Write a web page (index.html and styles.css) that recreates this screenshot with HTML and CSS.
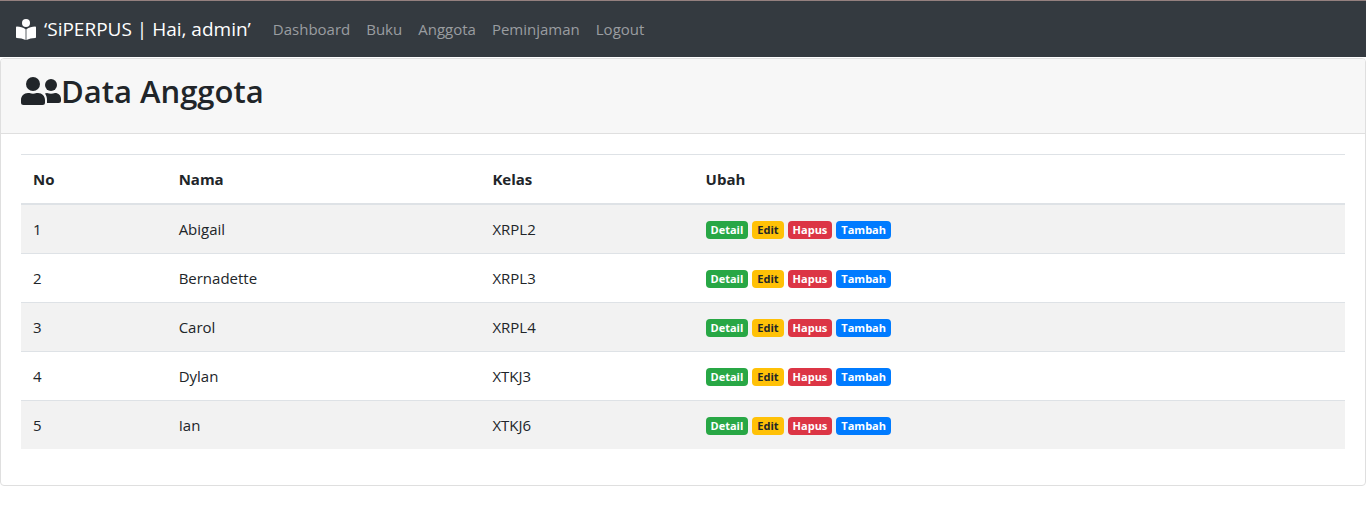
FILE: index.html
```html
<!DOCTYPE html>
<html lang="id">
<head>
<meta charset="utf-8">
<meta name="viewport" content="width=device-width, initial-scale=1">
<title>SiPERPUS - Data Anggota</title>
<link rel="stylesheet" href="styles.css">
</head>
<body>
<nav class="navbar">
  <a class="navbar-brand" href="#">
    <svg class="brand-icon" viewBox="0 0 20 21" aria-hidden="true">
      <circle cx="10" cy="4" r="4"/>
      <path d="M9.600 10.200C7 8.500 4 7.700 0.800 7.600Q0 7.600 0 8.400V18.200Q0 19 0.800 19C4 19.200 7 19.800 9.600 21Z"/>
      <path d="M10.400 10.200C13 8.500 16 7.700 19.200 7.600Q20 7.600 20 8.400V18.200Q20 19 19.200 19C16 19.200 13 19.800 10.400 21Z"/>
    </svg>
    <span>‘SiPERPUS | Hai, admin’</span>
  </a>
  <ul class="navbar-nav">
    <li><a class="nav-link" href="#">Dashboard</a></li>
    <li><a class="nav-link" href="#">Buku</a></li>
    <li><a class="nav-link" href="#">Anggota</a></li>
    <li><a class="nav-link" href="#">Peminjaman</a></li>
    <li><a class="nav-link" href="#">Logout</a></li>
  </ul>
</nav>
<main class="card">
  <header class="card-header">
    <h2 class="card-title">
      <svg class="title-icon" viewBox="0 0 40 28" aria-hidden="true">
        <circle cx="12" cy="7" r="7"/>
        <path d="M7 16H8.500Q12 17.500 15.500 16H17C21 16 24 19 24 23V25.500Q24 28 21.500 28H2.500Q0 28 0 25.500V23C0 19 3 16 7 16Z"/>
        <circle cx="30" cy="8" r="6"/>
        <path d="M24 16.500L26 16Q30 17.500 34 16C37.500 16 40 18.600 40 22V23.500Q40 26 37.500 26H26V23C26 20.500 25.300 18.300 24 16.500Z"/>
      </svg>
      <span>Data Anggota</span>
    </h2>
  </header>
  <div class="card-body">
    <table class="table">
      <thead>
        <tr>
          <th class="col-no" scope="col">No</th>
          <th class="col-nama" scope="col">Nama</th>
          <th class="col-kelas" scope="col">Kelas</th>
          <th scope="col">Ubah</th>
        </tr>
      </thead>
      <tbody>
        <tr>
          <td>1</td><td>Abigail</td><td>XRPL2</td>
          <td><div class="actions"><a class="badge badge-success" href="#">Detail</a><a class="badge badge-warning" href="#">Edit</a><a class="badge badge-danger" href="#">Hapus</a><a class="badge badge-primary" href="#">Tambah</a></div></td>
        </tr>
        <tr>
          <td>2</td><td>Bernadette</td><td>XRPL3</td>
          <td><div class="actions"><a class="badge badge-success" href="#">Detail</a><a class="badge badge-warning" href="#">Edit</a><a class="badge badge-danger" href="#">Hapus</a><a class="badge badge-primary" href="#">Tambah</a></div></td>
        </tr>
        <tr>
          <td>3</td><td>Carol</td><td>XRPL4</td>
          <td><div class="actions"><a class="badge badge-success" href="#">Detail</a><a class="badge badge-warning" href="#">Edit</a><a class="badge badge-danger" href="#">Hapus</a><a class="badge badge-primary" href="#">Tambah</a></div></td>
        </tr>
        <tr>
          <td>4</td><td>Dylan</td><td>XTKJ3</td>
          <td><div class="actions"><a class="badge badge-success" href="#">Detail</a><a class="badge badge-warning" href="#">Edit</a><a class="badge badge-danger" href="#">Hapus</a><a class="badge badge-primary" href="#">Tambah</a></div></td>
        </tr>
        <tr>
          <td>5</td><td>Ian</td><td>XTKJ6</td>
          <td><div class="actions"><a class="badge badge-success" href="#">Detail</a><a class="badge badge-warning" href="#">Edit</a><a class="badge badge-danger" href="#">Hapus</a><a class="badge badge-primary" href="#">Tambah</a></div></td>
        </tr>
      </tbody>
    </table>
  </div>
</main>
</body>
</html>
```
FILE: styles.css
```css
*,
*::before,
*::after {
  box-sizing: border-box;
}

body {
  margin: 0;
  background: #fff;
  color: #212529;
  font-family: "Segoe UI", "Open Sans", "Noto Sans", sans-serif;
  font-size: 15px;
  line-height: 24px;
}

a {
  text-decoration: none;
}

.navbar {
  display: flex;
  align-items: center;
  min-height: 57px;
  padding: 8px 16px;
  border-top: 1px solid #94807f;
  background: #343a40;
}

.navbar-brand {
  display: flex;
  align-items: center;
  gap: 8px;
  margin-right: 14px;
  color: #fff;
  font-size: 19px;
  line-height: 30px;
  white-space: nowrap;
}

.brand-icon {
  width: 20px;
  height: 21px;
  fill: #fff;
}

.navbar-nav {
  display: flex;
  flex-wrap: wrap;
  margin: 0;
  padding: 0;
  list-style: none;
}

.nav-link {
  display: block;
  padding: 8px;
  color: #9a9da0;
}

.nav-link:hover {
  color: #c8cacc;
}

.card {
  margin-top: 1px;
  border: 1px solid #dfdfdf;
  border-radius: 4px;
}

.card-header {
  padding: 13px 20px 23px;
  border-bottom: 1px solid #dfdfdf;
  border-radius: 3px 3px 0 0;
  background: #f7f7f7;
}

.card-title {
  display: flex;
  align-items: center;
  margin: 0;
  font-size: 31px;
  font-weight: 600;
  line-height: 38px;
}

.title-icon {
  width: 40px;
  height: 28px;
  fill: #212529;
}

.card-body {
  padding: 20px 20px 36px;
}

.table {
  width: 100%;
  border-collapse: separate;
  border-spacing: 0;
  table-layout: fixed;
}

.table th,
.table td {
  padding: 12px;
  border-top: 1px solid #dee2e6;
  text-align: left;
}

.table th {
  border-bottom: 1px solid #dee2e6;
  font-weight: 700;
}

.table tbody tr:nth-child(odd) {
  background: #f2f2f2;
}

.col-no {
  width: 11%;
}

.col-nama {
  width: 23.7%;
}

.col-kelas {
  width: 16.1%;
}

.actions {
  display: flex;
  align-items: center;
  gap: 4px;
  height: 24px;
  padding-top: 2px;
}

.badge {
  padding: 3px 5px;
  border-radius: 4px;
  color: #fff;
  font-size: 11px;
  font-weight: 700;
  line-height: 12px;
}

.badge-success {
  background: #28a745;
}

.badge-warning {
  background: #ffc107;
  color: #212529;
}

.badge-danger {
  background: #dc3545;
}

.badge-primary {
  background: #007bff;
}
```
